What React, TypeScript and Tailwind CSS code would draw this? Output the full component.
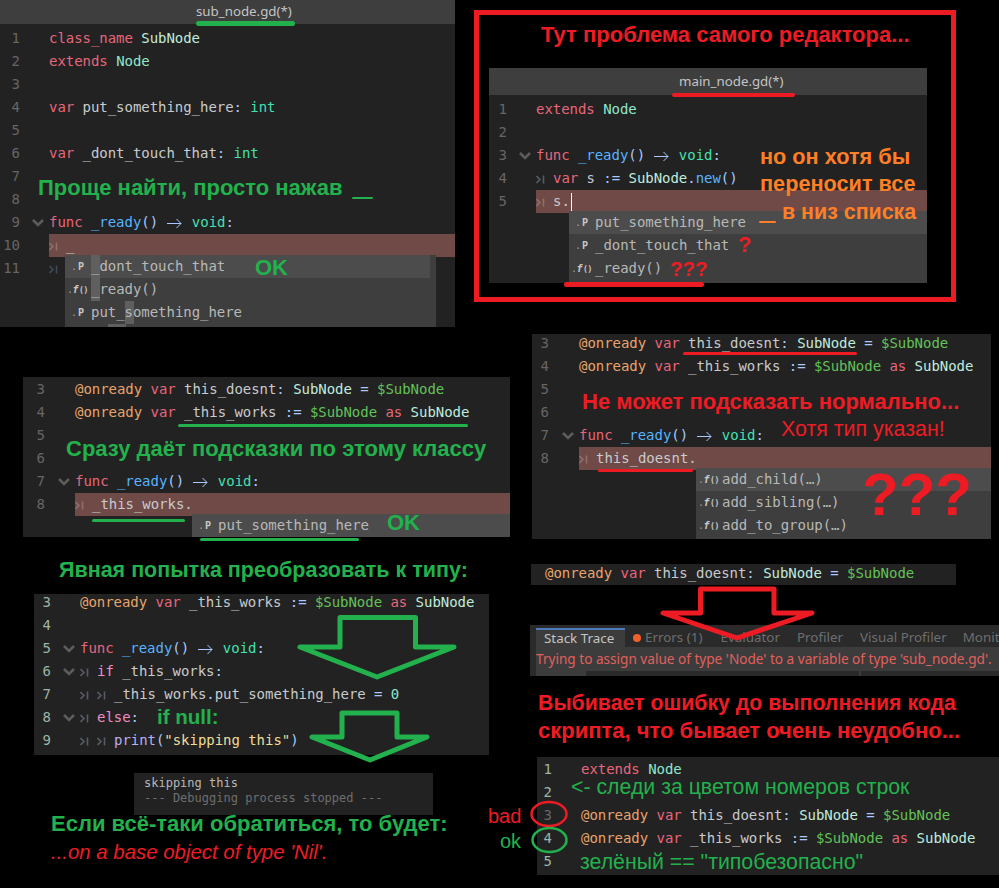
import type { ReactNode } from "react";

const KW = "text-[#e8667b]";
const TYPE = "text-[#8fe8cc]";
const USER = "text-[#c0ecdf]";
const BASE = "text-[#42e0b0]";
const FN = "text-[#57b3ff]";
const SYM = "text-[#abc9ff]";
const ANNO = "text-[#e8a46c]";
const PATH = "text-[#63c259]";
const CTRL = "text-[#f08cc4]";
const STR = "text-[#f0dc98]";
const TXT = "text-[#c8cacd]";

const GREEN = "text-[#22b14c]";
const RED = "text-[#ed1c24]";
const ORANGE = "text-[#ff7f27]";

function T({ c, children }: { c: string; children: ReactNode }) {
    return <span className={c}>{children}</span>;
}

function Guide({ tone = "text-[#565d66]" }: { tone?: string }) {
    return (
        <span className={`inline-flex w-[17px] items-center align-[-1px] ${tone}`}>
            <svg width="9" height="9" viewBox="0 0 9 9" fill="none" stroke="currentColor" strokeWidth="1.6">
                <path d="M0.5 1 L4 4.5 L0.5 8" />
                <path d="M7.5 0.5 V8.5" />
            </svg>
        </span>
    );
}

function Fold() {
    return (
        <svg className="absolute right-[5px] top-[8px] text-[#5c5c5c]" width="12" height="8" viewBox="0 0 12 8" fill="none" stroke="currentColor" strokeWidth="2.6">
            <path d="M1 1 L6 6 L11 1" />
        </svg>
    );
}

// "->" ligature of the editor font, two cells wide
function Arrow() {
    return (
        <svg className="mx-[1px] inline-block align-[-2px]" width="15" height="11" viewBox="0 0 15 11" fill="none" stroke="#abc9ff" strokeWidth="1">
            <path d="M0 5.5 H14 M9.5 1 L14 5.5 L9.5 10" />
        </svg>
    );
}

function Ready() {
    return (
        <>
            <T c={KW}>func</T> <T c={FN}>_ready</T><T c={SYM}>()</T> <Arrow /> <T c={BASE}>void</T><T c={SYM}>:</T>
        </>
    );
}

function Line({
    n,
    numW,
    foldW,
    numC = "text-[#666666]",
    fold,
    hl,
    children,
}: {
    n: number;
    numW: string;
    foldW: string;
    numC?: string;
    fold?: boolean;
    hl?: boolean;
    children?: ReactNode;
}) {
    return (
        <div className="flex h-[23px] items-center">
            <div className={`shrink-0 text-right ${numW} ${numC}`}>{n}</div>
            <div className={`relative h-full shrink-0 ${foldW}`}>{fold && <Fold />}</div>
            <div className={`h-full flex-1 whitespace-pre leading-[23px] ${TXT} ${hl ? "bg-[#6f4a47]" : ""}`}>{children}</div>
        </div>
    );
}

function MemberIcon() {
    return (
        <span className="inline-flex w-[26px] shrink-0 items-baseline pl-[6px] text-[10px] font-bold text-[#c8c8c8]">
            <span className="font-normal text-[#999999]">.</span>
            <span className="ml-[1px]">P</span>
        </span>
    );
}

function FuncIcon() {
    return (
        <span className="inline-flex w-[26px] shrink-0 items-baseline pl-[2px] text-[10px] font-bold tracking-[-0.5px] text-[#c8c8c8]">
            <span className="font-normal text-[#999999]">.</span>
            <span className="italic">f</span>
            <span className="ml-[1px] text-[8px]">()</span>
        </span>
    );
}

function Row({ fn, active, children }: { fn?: boolean; active?: boolean; children: ReactNode }) {
    return (
        <div className={`flex h-[23px] items-center whitespace-pre text-[#b8b8b8] ${active ? "bg-[#4c4c4c]" : ""}`}>
            {fn ? <FuncIcon /> : <MemberIcon />}
            {children}
        </div>
    );
}

function Note({ className, children }: { className: string; children: ReactNode }) {
    return <div className={`absolute whitespace-pre font-['Liberation_Sans',sans-serif] leading-[26px] ${className}`}>{children}</div>;
}

function Rule({ className }: { className: string }) {
    return <div className={`absolute rounded-full ${className}`} />;
}

const MONO = "font-['DejaVu_Sans_Mono',monospace] text-[14px] tracking-[-0.04px]";
const PANEL = `absolute bg-[#222222] ${MONO}`;
const POPUP = "absolute overflow-hidden bg-[#3e3e3e]";
const TAB = "flex items-center bg-[#3e3e3e] font-['Noto_Sans',sans-serif] text-[13.3px] tracking-normal text-[#c4c4c4]";

function SubNodeEditor() {
    const w = { numW: "w-[20px]", foldW: "w-[29px]" };
    return (
        <div className={`${PANEL} left-0 top-0 h-[327px] w-[455px]`}>
            <div className={`${TAB} h-[24px] pl-[196px]`}>sub_node.gd(*)</div>
            <div className="pt-[3px]">
                <Line n={1} {...w}><T c={KW}>class_name</T> <T c={USER}>SubNode</T></Line>
                <Line n={2} {...w}><T c={KW}>extends</T> <T c={TYPE}>Node</T></Line>
                <Line n={3} {...w} />
                <Line n={4} {...w}><T c={KW}>var</T> put_something_here<T c={SYM}>:</T> <T c={BASE}>int</T></Line>
                <Line n={5} {...w} />
                <Line n={6} {...w}><T c={KW}>var</T> _dont_touch_that<T c={SYM}>:</T> <T c={BASE}>int</T></Line>
                <Line n={7} {...w} />
                <Line n={8} {...w} />
                <Line n={9} {...w} fold><Ready /></Line>
                <Line n={10} {...w} hl><Guide tone="text-[#8e6f6c]" />_</Line>
                <Line n={11} {...w}><Guide tone="text-[#3f4a5c]" /></Line>
            </div>
            <div className={`${POPUP} left-[65px] top-[255px] h-[72px] w-[371px]`}>
                <div className="absolute left-[26px] top-0 h-[46px] w-[9px] bg-[#5f5f5f]" />
                <div className="absolute left-[60px] top-[46px] h-[23px] w-[9px] bg-[#5f5f5f]" />
                <div className="absolute left-[43px] top-[69px] h-[3px] w-[18px] bg-[#5f5f5f]" />
                <div className="absolute right-[6px] top-0 h-[23px] w-[365px] bg-[#4c4c4c]" />
                <div className="absolute left-[26px] top-0 h-[23px] w-[9px] bg-[#5f5f5f]" />
                <div className="relative w-[365px]">
                    <Row>_dont_touch_that</Row>
                    <Row fn>_ready()</Row>
                    <Row>put_something_here</Row>
                </div>
            </div>
        </div>
    );
}

function MainNodeEditor() {
    const w = { numW: "w-[18px]", foldW: "w-[29px]" };
    return (
        <div className={`${PANEL} left-[489px] top-[68px] h-[215px] w-[438px]`}>
            <div className={`${TAB} h-[27px] pl-[190px]`}>main_node.gd(*)</div>
            <div className="pt-[3px]">
                <Line n={1} {...w}><T c={KW}>extends</T> <T c={TYPE}>Node</T></Line>
                <Line n={2} {...w} />
                <Line n={3} {...w} fold><Ready /></Line>
                <Line n={4} {...w}><Guide /><T c={KW}>var</T> s <T c={SYM}>:=</T> <T c={USER}>SubNode</T><T c={SYM}>.</T><T c={FN}>new</T><T c={SYM}>()</T></Line>
                <Line n={5} {...w} hl>
                    <Guide tone="text-[#8e6f6c]" />s.<span className="ml-[1px] inline-block h-[18px] w-px bg-white align-middle" />
                </Line>
            </div>
            <div className={`${POPUP} left-[80px] top-[143px] h-[72px] w-[358px]`}>
                <Row active>put_something_here</Row>
                <Row>_dont_touch_that</Row>
                <Row fn>_ready()</Row>
            </div>
        </div>
    );
}

function CompletionEditor() {
    const w = { numW: "w-[17px]", foldW: "w-[30px]" };
    return (
        <div className={`${PANEL} left-[532px] top-[334px] h-[205px] w-[459px]`}>
            <div className="-mt-[2px]">
                <Line n={3} {...w}><T c={ANNO}>@onready</T> <T c={KW}>var</T> this_doesnt<T c={SYM}>:</T> <T c={USER}>SubNode</T> <T c={SYM}>=</T> <T c={PATH}>$SubNode</T></Line>
                <Line n={4} {...w}><T c={ANNO}>@onready</T> <T c={KW}>var</T> _this_works <T c={SYM}>:=</T> <T c={PATH}>$SubNode</T> <T c={KW}>as</T> <T c={USER}>SubNode</T></Line>
                <Line n={5} {...w} />
                <Line n={6} {...w} />
                <Line n={7} {...w} fold><Ready /></Line>
                <Line n={8} {...w} hl><Guide tone="text-[#8e6f6c]" />this_doesnt.</Line>
            </div>
            <div className={`${POPUP} left-[164px] top-[134px] h-[71px] w-[295px]`}>
                <Row fn active>add_child(…)</Row>
                <Row fn>add_sibling(…)</Row>
                <Row fn>add_to_group(…)</Row>
            </div>
        </div>
    );
}

function WorksEditor() {
    const w = { numW: "w-[22px]", foldW: "w-[30px]" };
    return (
        <div className={`${PANEL} left-[23px] top-[377px] h-[160px] w-[487px]`}>
            <div className="pt-[1px]">
                <Line n={3} {...w}><T c={ANNO}>@onready</T> <T c={KW}>var</T> this_doesnt<T c={SYM}>:</T> <T c={USER}>SubNode</T> <T c={SYM}>=</T> <T c={PATH}>$SubNode</T></Line>
                <Line n={4} {...w}><T c={ANNO}>@onready</T> <T c={KW}>var</T> _this_works <T c={SYM}>:=</T> <T c={PATH}>$SubNode</T> <T c={KW}>as</T> <T c={USER}>SubNode</T></Line>
                <Line n={5} {...w} />
                <Line n={6} {...w} />
                <Line n={7} {...w} fold><Ready /></Line>
                <Line n={8} {...w} hl><Guide tone="text-[#8e6f6c]" />_this_works.</Line>
            </div>
            <div className={`${POPUP} left-[169px] top-[137px] h-[23px] w-[318px]`}>
                <Row active>put_something_here</Row>
            </div>
        </div>
    );
}

function CastEditor() {
    const w = { numW: "w-[17px]", foldW: "w-[29px]", numC: "text-[#9db5a6]" };
    return (
        <div className={`${PANEL} left-[34px] top-[594px] h-[161px] w-[455px]`}>
            <div className="-mt-[3px]">
                <Line n={3} {...w}><T c={ANNO}>@onready</T> <T c={KW}>var</T> _this_works <T c={SYM}>:=</T> <T c={PATH}>$SubNode</T> <T c={KW}>as</T> <T c={USER}>SubNode</T></Line>
                <Line n={4} {...w} />
                <Line n={5} {...w} fold><Ready /></Line>
                <Line n={6} {...w} fold><Guide /><T c={CTRL}>if</T> _this_works<T c={SYM}>:</T></Line>
                <Line n={7} {...w}><Guide /><Guide />_this_works<T c={SYM}>.</T>put_something_here <T c={SYM}>=</T> <T c={TYPE}>0</T></Line>
                <Line n={8} {...w} fold><Guide /><T c={CTRL}>else</T><T c={SYM}>:</T></Line>
                <Line n={9} {...w}><Guide /><Guide /><T c="text-[#b8aef0]">print</T><T c={SYM}>(</T><T c={STR}>"skipping this"</T><T c={SYM}>)</T></Line>
            </div>
        </div>
    );
}

function ErrorPanel() {
    return (
        <div className="absolute left-[530px] top-[625px] flex h-[51px] w-[469px] flex-col overflow-hidden bg-[#2a2a2a] pl-[6px] pt-[3px] font-['Noto_Sans',sans-serif] text-[13.4px] text-[#6e6e6e]">
            <div className="flex h-[19px] shrink-0 items-center whitespace-pre">
                <div className="flex h-full w-[89px] shrink-0 items-center border-t-2 border-[#4a7ab8] bg-[#3c3c3c] pl-[8px] text-[#c4c4c4]">Stack Trace</div>
                <span className="ml-[8px] h-[8px] w-[8px] shrink-0 rounded-full bg-[#f0602a]" />
                <span className="ml-[4px] shrink-0">Errors (1)</span>
                <span className="ml-[18px] shrink-0">Evaluator</span>
                <span className="ml-[17px] shrink-0">Profiler</span>
                <span className="ml-[17px] shrink-0">Visual Profiler</span>
                <span className="ml-[16px] shrink-0">Monitors</span>
            </div>
            <div className="flex h-[24px] shrink-0 items-center whitespace-pre bg-[#3c3c3c] text-[13.6px] text-[#e0605c]">
                Trying to assign value of type 'Node' to a variable of type 'sub_node.gd'.
            </div>
            <div className="flex h-[5px] shrink-0">
                <div className="h-full w-[50px] bg-[#3c3c3c]" />
                <div className="ml-[273px] h-full w-[2px] bg-[#3c3c3c]" />
            </div>
        </div>
    );
}

function OverviewEditor() {
    const w = { numW: "w-[15px]", foldW: "w-[29px]", numC: "text-[#9db5a6]" };
    return (
        <div className={`${PANEL} left-[537px] top-[757px] h-[118px] w-[462px] pt-[1px]`}>
            <Line n={1} {...w}><T c={KW}>extends</T> <T c={TYPE}>Node</T></Line>
            <Line n={2} {...w} />
            <Line n={3} {...w} numC="text-[#666666]"><T c={ANNO}>@onready</T> <T c={KW}>var</T> this_doesnt<T c={SYM}>:</T> <T c={USER}>SubNode</T> <T c={SYM}>=</T> <T c={PATH}>$SubNode</T></Line>
            <Line n={4} {...w}><T c={ANNO}>@onready</T> <T c={KW}>var</T> _this_works <T c={SYM}>:=</T> <T c={PATH}>$SubNode</T> <T c={KW}>as</T> <T c={USER}>SubNode</T></Line>
            <Line n={5} {...w} />
        </div>
    );
}

function Drawings() {
    return (
        <svg className="pointer-events-none absolute left-0 top-0" width="999" height="888" viewBox="0 0 999 888" fill="none">
            <path d="M700.5 589 H774 V613 H812 L737 638 L663 613 H700.5 Z" stroke="#ed1c24" strokeWidth="5" strokeLinejoin="round" />
            <path d="M340 617.5 H415.5 V647 H454 L377 677 L300 647 H340 Z" stroke="#22b14c" strokeWidth="5" strokeLinejoin="round" />
            <path d="M342 713 H397 V737 H427 L370 760 L312 737 H342 Z" stroke="#22b14c" strokeWidth="5" strokeLinejoin="round" />
            <ellipse cx="549" cy="814" rx="17.5" ry="12" stroke="#ed1c24" strokeWidth="2.5" />
            <ellipse cx="549.5" cy="840" rx="17" ry="12" stroke="#22b14c" strokeWidth="2.5" />
        </svg>
    );
}

export default function App() {
    return (
        <main className="relative h-[888px] w-[999px] overflow-hidden bg-black">
            <SubNodeEditor />
            <Rule className="left-[196px] top-[21px] h-[5px] w-[99px] bg-[#22b14c]" />
            <Note className={`left-[38px] top-[175px] text-[22px] font-bold ${GREEN}`}>Проще найти, просто нажав</Note>
            <Rule className="left-[352px] top-[197px] h-[2px] w-[21px] bg-[#22b14c]" />
            <Note className={`left-[255px] top-[255px] text-[22px] font-bold ${GREEN}`}>OK</Note>

            <div className="absolute left-[474px] top-[10px] h-[292px] w-[482px] border-[5px] border-[#ed1c24]" />
            <Note className={`left-[541px] top-[22px] text-[22px] font-bold ${RED}`}>Тут проблема самого редактора...</Note>
            <MainNodeEditor />
            <Rule className="left-[672px] top-[93px] h-[4px] w-[123px] bg-[#ed1c24]" />
            <Rule className="left-[564px] top-[282px] h-[5px] w-[140px] bg-[#ed1c24]" />
            <Note className={`left-[760px] top-[144px] text-[21.7px] font-bold ${ORANGE}`}>но он хотя бы</Note>
            <Note className={`left-[760px] top-[171px] text-[21.7px] font-bold ${ORANGE}`}>переносит все</Note>
            <Note className={`left-[782px] top-[199px] text-[21.4px] font-bold ${ORANGE}`}>в низ списка</Note>
            <Rule className="left-[759px] top-[221px] h-[2px] w-[17px] bg-[#ff7f27]" />
            <Note className={`left-[738px] top-[232px] text-[22px] font-bold ${RED}`}>?</Note>
            <Note className={`left-[670px] top-[256px] text-[20.5px] font-bold ${RED}`}>???</Note>

            <CompletionEditor />
            <Rule className="left-[683px] top-[352px] h-[3px] w-[174px] bg-[#ed1c24]" />
            <Rule className="left-[598px] top-[469px] h-[3px] w-[95px] bg-[#ed1c24]" />
            <Note className={`left-[582px] top-[389px] text-[22px] font-bold ${RED}`}>Не может подсказать нормально...</Note>
            <Note className={`left-[781px] top-[416px] text-[21.4px] ${RED}`}>Хотя тип указан!</Note>
            <Note className={`left-[862px] top-[482px] text-[60px] font-bold ${RED}`}>???</Note>

            <div className={`${PANEL} left-[531px] top-[564px] h-[21px] w-[425px] whitespace-pre pl-[14px] leading-[19px] ${TXT}`}>
                <T c={ANNO}>@onready</T> <T c={KW}>var</T> this_doesnt<T c={SYM}>:</T> <T c={USER}>SubNode</T> <T c={SYM}>=</T> <T c={PATH}>$SubNode</T>
            </div>
            <ErrorPanel />
            <Note className={`left-[538px] top-[690px] text-[21.3px] font-bold ${RED}`}>Выбивает ошибку до выполнения кода</Note>
            <Note className={`left-[538px] top-[718px] text-[22px] font-bold ${RED}`}>скрипта, что бывает очень неудобно...</Note>

            <OverviewEditor />
            <Note className={`left-[571px] top-[774px] text-[21.3px] ${GREEN}`}>{"<- следи за цветом номеров строк"}</Note>
            <Note className={`left-[580px] top-[849px] text-[21.3px] ${GREEN}`}>зелёный == "типобезопасно"</Note>
            <Note className={`left-[488px] top-[803px] text-[20px] ${RED}`}>bad</Note>
            <Note className={`left-[500px] top-[828px] text-[20px] ${GREEN}`}>ok</Note>

            <WorksEditor />
            <Rule className="left-[178px] top-[424px] h-[3px] w-[290px] bg-[#22b14c]" />
            <Rule className="left-[92px] top-[519px] h-[3px] w-[93px] bg-[#22b14c]" />
            <Rule className="left-[200px] top-[538px] h-[3px] w-[159px] bg-[#22b14c]" />
            <Note className={`left-[66px] top-[436px] text-[22px] font-bold ${GREEN}`}>Сразу даёт подсказки по этому классу</Note>
            <Note className={`left-[387px] top-[510px] text-[22px] font-bold ${GREEN}`}>OK</Note>
            <Note className={`left-[59px] top-[557px] text-[21.5px] font-bold ${GREEN}`}>Явная попытка преобразовать к типу:</Note>

            <CastEditor />
            <Note className={`left-[157px] top-[704px] text-[20.5px] font-bold ${GREEN}`}>if null:</Note>
            <div className="absolute left-[134px] top-[773px] h-[42px] w-[299px] bg-[#222222] pl-[10px] pt-[3px] font-['DejaVu_Sans_Mono',monospace] text-[12px] leading-[15px] text-[#b8b8b8]">
                <div>skipping this</div>
                <div className="text-[#6e6e6e]">--- Debugging process stopped ---</div>
            </div>
            <Note className={`left-[51px] top-[811px] text-[22px] font-bold ${GREEN}`}>Если всё-таки обратиться, то будет:</Note>
            <Note className={`left-[51px] top-[839px] text-[20.4px] italic ${RED}`}>...on a base object of type 'Nil'.</Note>

            <Drawings />
        </main>
    );
}
